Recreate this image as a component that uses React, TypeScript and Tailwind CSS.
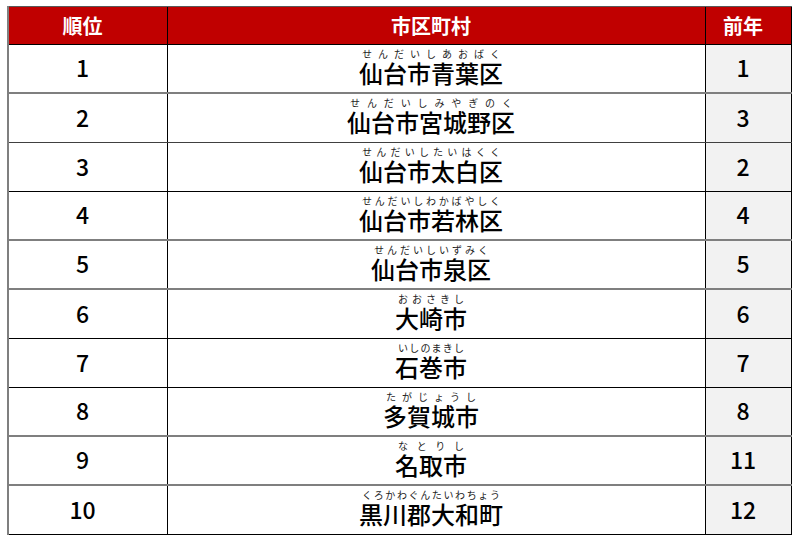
const rows = [
  { rank: '1', name: '仙台市青葉区', kana: 'せんだいしあおばく', prev: '1', line: 'border-b-2 border-[#7f7f7f]' },
  { rank: '2', name: '仙台市宮城野区', kana: 'せんだいしみやぎのく', prev: '3', line: 'border-b border-[#404040]' },
  { rank: '3', name: '仙台市太白区', kana: 'せんだいしたいはくく', prev: '2', line: 'border-b border-black' },
  { rank: '4', name: '仙台市若林区', kana: 'せんだいしわかばやしく', prev: '4', line: 'border-b-2 border-[#7f7f7f]' },
  { rank: '5', name: '仙台市泉区', kana: 'せんだいしいずみく', prev: '5', line: 'border-b-2 border-[#7f7f7f]' },
  { rank: '6', name: '大崎市', kana: 'おおさきし', prev: '6', line: 'border-b border-black' },
  { rank: '7', name: '石巻市', kana: 'いしのまきし', prev: '7', line: 'border-b border-black' },
  { rank: '8', name: '多賀城市', kana: 'たがじょうし', prev: '8', line: 'border-b-2 border-[#7f7f7f]' },
  { rank: '9', name: '名取市', kana: 'なとりし', prev: '11', line: 'border-b-2 border-[#7f7f7f]' },
  { rank: '10', name: '黒川郡大和町', kana: 'くろかわぐんたいわちょう', prev: '12', line: 'border-b border-black' },
];

const font = { fontFamily: '"Noto Sans CJK JP", "Noto Sans", sans-serif' };

function Furigana({ name, kana }: { name: string; kana: string }) {
  return (
    <div className="inline-flex flex-col items-stretch">
      <div className="flex justify-between px-[3px] text-[10px] leading-[12px] text-[#222]">
        {Array.from(kana).map((c, i) => (
          <span key={i}>{c}</span>
        ))}
      </div>
      <div className="text-[24px] leading-[26px] font-medium text-black">{name}</div>
    </div>
  );
}

export default function App() {
  return (
    <div className="w-[800px] h-[541px] bg-white pt-[6px] pl-[7px]" style={font}>
      <div className="w-[785px] border-l-2 border-[#7f7f7f]">
        <div className="grid grid-cols-[159px_538px_86px] h-[39px] bg-[#c00000] border-t border-[#595959] border-b border-b-black text-white text-[20px] font-bold">
          <div className="flex items-center justify-center border-r border-black pr-[11px]">順位</div>
          <div className="flex items-center justify-center border-r border-black pr-[11px]">市区町村</div>
          <div className="flex items-center justify-center border-r border-black pr-[11px]">前年</div>
        </div>
        {rows.map((r) => (
          <div key={r.rank} className={`grid grid-cols-[159px_538px_86px] h-[49px] ${r.line}`}>
            <div className="flex items-center justify-center border-r border-black text-[23px] font-medium text-black pb-[2px] pr-[11px]">
              {r.rank}
            </div>
            <div className="flex items-center justify-center border-r border-black pb-[4px] pr-[11px]">
              <Furigana name={r.name} kana={r.kana} />
            </div>
            <div className="flex items-center justify-center border-r border-black bg-[#f2f2f2] text-[23px] font-medium text-black pb-[2px] pr-[11px]">
              {r.prev}
            </div>
          </div>
        ))}
      </div>
    </div>
  );
}
